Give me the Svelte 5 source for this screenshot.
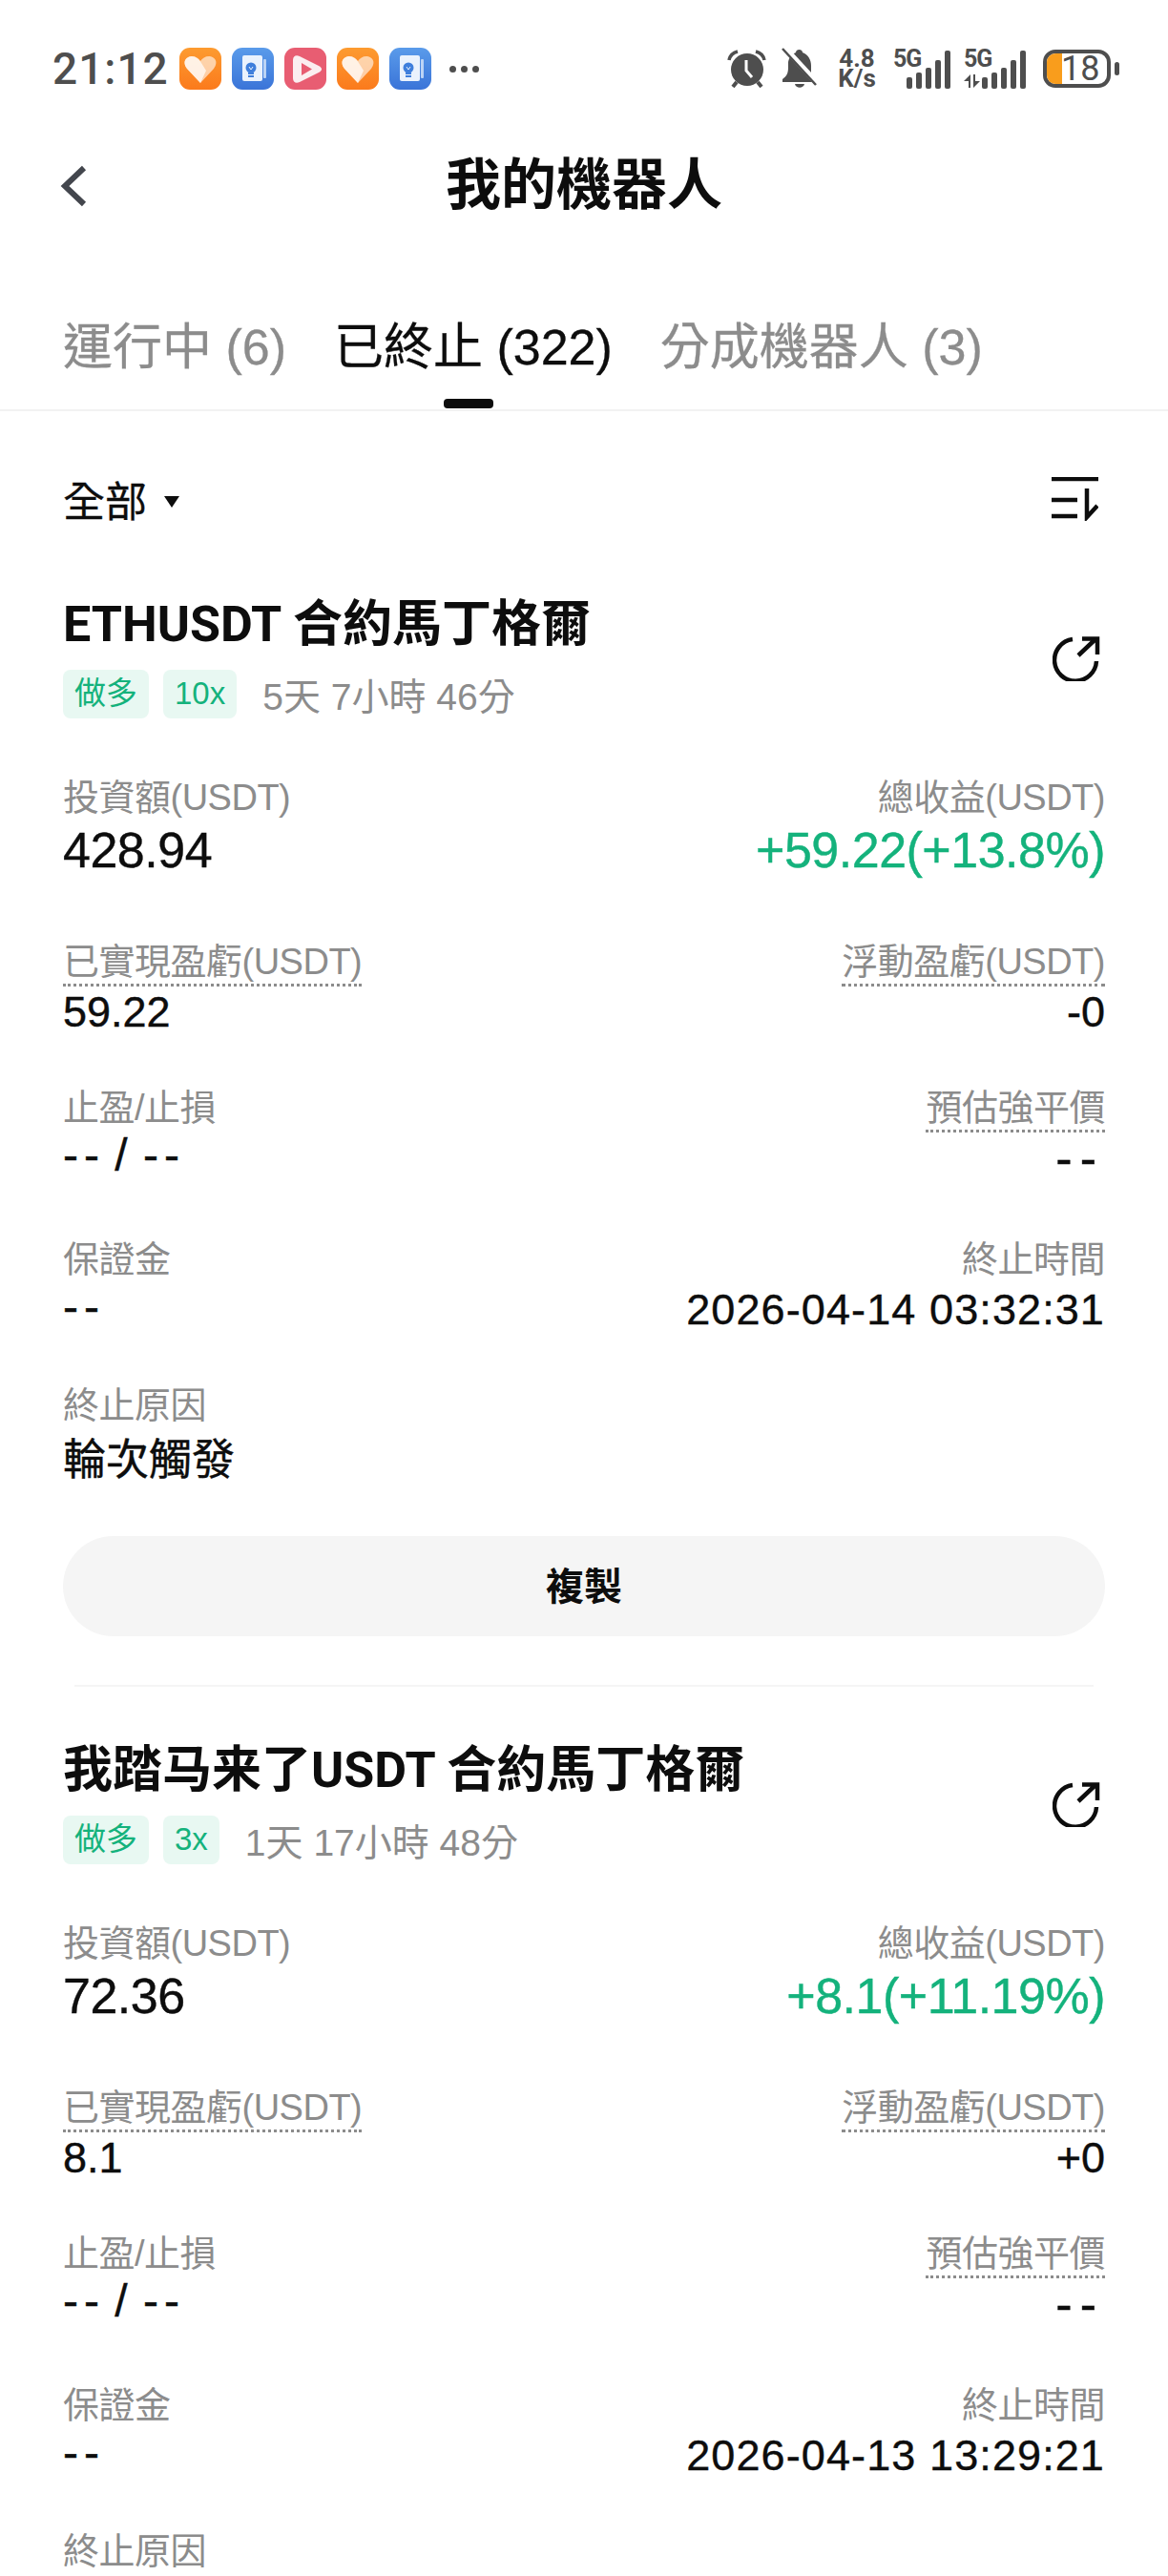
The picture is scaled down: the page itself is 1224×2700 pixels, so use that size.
<script>
	const bots = [
		{
			title: 'ETHUSDT 合約馬丁格爾', lev: '10x', time: '5天 7小時 46分',
			invest: '428.94', total: '+59.22(+13.8%)', realized: '59.22', floating: '-0',
			end: '2026-04-14 03:32:31', reason: '輪次觸發'
		},
		{
			title: '我踏马来了USDT 合約馬丁格爾', lev: '3x', time: '1天 17小時 48分',
			invest: '72.36', total: '+8.1(+11.19%)', realized: '8.1', floating: '+0',
			end: '2026-04-13 13:29:21', reason: ''
		}
	];
</script>

{#snippet bars()}
	<svg class="bars" width="47" height="40" viewBox="0 0 47 40">
		<g fill="#4e4e4e">
			<rect x="0" y="28" width="6" height="12" rx="2" />
			<rect x="10" y="23" width="6" height="17" rx="2" />
			<rect x="20" y="18" width="6" height="22" rx="2" />
			<rect x="30" y="10" width="6" height="30" rx="2" />
			<rect x="40" y="0" width="6" height="40" rx="2" />
		</g>
	</svg>
{/snippet}

<div class="page">
	<!-- status bar -->
	<div class="status">
		<div class="status-left">
			<span class="clock">21:12</span>
			{#each ['heart', 'book', 'play', 'heart', 'book'] as app}
				<span class="app {app}">
					{#if app === 'heart'}
						<svg viewBox="0 0 44 44" width="44" height="44">
							<path d="M22 37 L8 22 C2 14 8 9 13 9 C17 9 20 11 22 14 C24 11 27 9 31 9 C36 9 42 14 36 22 Z" fill="#fff" opacity=".6" />
							<path d="M22 37 L8 22 C2 14 8 9 13 9 C17 9 21 12 23 16 L28 24 Z" fill="#fff" opacity=".7" />
						</svg>
					{:else if app === 'book'}
						<svg viewBox="0 0 44 44" width="44" height="44">
							<rect x="11" y="8" width="21" height="27" rx="2" fill="#eaf2fd" />
							<rect x="33" y="12" width="3" height="20" rx="1" fill="#bcd4f5" />
							<circle cx="20" cy="21" r="5.5" fill="#3f7fdc" />
							<rect x="17" y="26" width="6" height="2" fill="#3f7fdc" />
							<rect x="17" y="29" width="6" height="2" fill="#3f7fdc" />
							<path d="M18 20 L20 23 L22 20" stroke="#eaf2fd" stroke-width="1" fill="none" />
						</svg>
					{:else}
						<svg viewBox="0 0 44 44" width="44" height="44">
							<path d="M9 13 C9 9 12 7 16 9 L36 19 C40 21 40 24 36 26 L16 36 C12 38 9 36 9 32 Z" fill="#fbeef0" />
							<path d="M18 16 L29 22.5 L18 29 Z" fill="#e85d72" />
						</svg>
					{/if}
				</span>
			{/each}
			<span class="more"><i></i><i></i><i></i></span>
		</div>
		<div class="status-right">
			<svg class="alarm" width="41" height="40" viewBox="0 0 41 40">
				<circle cx="21" cy="21" r="17" fill="#4e4e4e" />
				<path d="M2 11 C3 6 7 3 11 2 M39 11 C38 6 34 3 30 2" stroke="#4e4e4e" stroke-width="3.5" fill="none" />
				<path d="M10 34 L6 39 M32 34 L36 39" stroke="#4e4e4e" stroke-width="4" />
				<path d="M20 11 V22 L26 29" stroke="#fff" stroke-width="3" fill="none" />
			</svg>
			<svg class="bell" width="38" height="44" viewBox="0 0 38 44">
				<path d="M15 5 C15 1 22 1 22 5 C28 7 31 13 31 19 V27 L36 33 V36 H1 V33 C5 30 7 27 7 21 V15 C8 10 11 7 15 5 Z" fill="#4e4e4e" />
				<path d="M14 38 H24 C23 43 15 43 14 38 Z" fill="#4e4e4e" />
				<path d="M3 0 L38 38" stroke="#fff" stroke-width="6" />
				<path d="M1 1 L36 39" stroke="#4e4e4e" stroke-width="2.5" />
			</svg>
			<span class="speed"><span>4.8</span><span>K/s</span></span>
			<span class="net">
				<span class="fiveg">5G</span>
				{@render bars()}
			</span>
			<span class="net second">
				<span class="fiveg">5G</span>
				<svg class="arrows" width="17" height="14" viewBox="0 0 17 14"><path d="M7 0 V14 H5 V7 H0 Z M10 14 V0 H12 V7 H17 Z" fill="#4e4e4e" /></svg>
				{@render bars()}
			</span>
			<span class="battery"><span class="fill"></span><span class="level">18</span></span>
			<span class="nub"></span>
		</div>
	</div>

	<!-- title -->
	<div class="nav">
		<svg class="back" width="30" height="46" viewBox="0 0 30 46"><path d="M26 4 L6 23 L26 42" stroke="#43464d" stroke-width="6" fill="none" /></svg>
		<h1>我的機器人</h1>
	</div>

	<!-- tabs -->
	<div class="tabs">
		<span class="tab">運行中 (6)</span>
		<span class="tab on">已終止 (322)</span>
		<span class="tab">分成機器人 (3)</span>
	</div>

	<div class="filter">
		<span class="all">全部<i class="caret"></i></span>
		<svg width="49" height="46" viewBox="0 0 49 46">
			<path d="M0 2 H49 M0 24 H27 M0 41 H27" stroke="#0d0d0d" stroke-width="4.5" />
			<path d="M37 12 V42 L48 30" stroke="#0d0d0d" stroke-width="4.5" fill="none" />
		</svg>
	</div>

	{#each bots as bot, i}
		<section class="bot">
			<div class="head">
				<div>
					<div class="name">{bot.title}</div>
					<div class="tags">
						<span class="tag">做多</span>
						<span class="tag">{bot.lev}</span>
						<span class="runtime">{bot.time}</span>
					</div>
				</div>
				<svg class="share" width="50" height="48" viewBox="0 0 50 48">
					<path d="M21 4 A22 22 0 1 0 46 27" stroke="#0d0d0d" stroke-width="4.5" fill="none" />
					<path d="M27 21 L45 4 M31 3.5 H47 V20" stroke="#0d0d0d" stroke-width="4.5" fill="none" />
				</svg>
			</div>

			<div class="row r1">
				<div><div class="lbl">投資額(USDT)</div><div class="val big">{bot.invest}</div></div>
				<div class="right"><div class="lbl">總收益(USDT)</div><div class="val big green">{bot.total}</div></div>
			</div>
			<div class="row r2">
				<div><div class="lbl"><span class="dots">已實現盈虧(USDT)</span></div><div class="val">{bot.realized}</div></div>
				<div class="right"><div class="lbl"><span class="dots">浮動盈虧(USDT)</span></div><div class="val">{bot.floating}</div></div>
			</div>
			<div class="row r3">
				<div><div class="lbl">止盈/止損</div><div class="val dash">-- / --</div></div>
				<div class="right"><div class="lbl"><span class="dots">預估強平價</span></div><div class="val dash low">--</div></div>
			</div>
			<div class="row r4">
				<div><div class="lbl">保證金</div><div class="val dash">--</div></div>
				<div class="right"><div class="lbl">終止時間</div><div class="val date">{bot.end}</div></div>
			</div>
			<div class="row r5">
				<div><div class="lbl">終止原因</div>{#if bot.reason}<div class="val">{bot.reason}</div>{/if}</div>
			</div>
			{#if i === 0}
				<button class="copy">複製</button>
				<div class="sep"></div>
			{/if}
		</section>
	{/each}
</div>

<style>
	:global(body) {
		margin: 0;
		background: #fff;
	}
	.page {
		width: 1224px;
		height: 2700px;
		overflow: hidden;
		font-family: "Liberation Sans", "Noto Sans CJK TC", sans-serif;
		color: #0d0d0d;
	}
	.status {
		display: flex;
		justify-content: space-between;
		align-items: center;
		height: 44px;
		padding: 50px 51px 0 55px;
		color: #4e4e4e;
	}
	.status-left, .status-right {
		display: flex;
		align-items: center;
	}
	.clock {
		font-family: Roboto, sans-serif;
		font-size: 46px;
		font-weight: 500;
		letter-spacing: 1px;
		width: 133px;
	}
	.app {
		width: 44px;
		height: 44px;
		border-radius: 11px;
		margin-right: 11px;
		overflow: hidden;
	}
	.heart { background: linear-gradient(#fd9b30, #fb7a1c); }
	.book { background: linear-gradient(#5a9bea, #3a74d8); }
	.play { background: #e85d72; }
	.more {
		display: flex;
		gap: 5px;
		margin-left: 8px;
	}
	.more i {
		width: 7px;
		height: 7px;
		border-radius: 50%;
		background: #4e4e4e;
	}
	.alarm { margin-right: 16px; }
	.bell { margin-right: 20px; }
	.speed {
		display: flex;
		flex-direction: column;
		align-items: center;
		width: 42px;
		margin-right: 17px;
		font-family: Roboto, sans-serif;
		font-size: 26px;
		font-weight: 700;
		line-height: 21px;
	}
	.net {
		position: relative;
		display: flex;
		align-items: flex-end;
		height: 42px;
		margin-right: 13px;
		padding-left: 14px;
	}
	.fiveg {
		position: absolute;
		left: 0;
		top: 0;
		font-family: Roboto, sans-serif;
		font-size: 25px;
		font-weight: 700;
		letter-spacing: -1px;
		line-height: 22px;
	}
	.net.second {
		padding-left: 0;
		margin-right: 17px;
	}
	.arrows { margin: 0 2px 1px 0; }
	.bars { display: block; }
	.battery {
		position: relative;
		box-sizing: border-box;
		width: 71px;
		height: 40px;
		border: 4px solid #4e4e4e;
		border-radius: 13px;
		overflow: hidden;
	}
	.fill {
		position: absolute;
		left: 0;
		top: 0;
		bottom: 0;
		width: 16px;
		background: #f99d1c;
	}
	.level {
		position: absolute;
		left: 15px;
		top: -1px;
		font-family: Roboto, sans-serif;
		font-size: 36px;
		line-height: 34px;
	}
	.nub {
		width: 5px;
		height: 14px;
		border-radius: 3px;
		background: #4e4e4e;
		margin-left: 4px;
	}
	.nav {
		position: relative;
		display: flex;
		justify-content: center;
		align-items: center;
		height: 60px;
		margin-top: 70px;
	}
	.back {
		position: absolute;
		left: 62px;
		top: 8px;
	}
	h1 {
		margin: 0;
		font-size: 58px;
		font-weight: 700;
		line-height: 60px;
	}
	.tabs {
		display: flex;
		gap: 50px;
		height: 98px;
		margin-top: 109px;
		padding-left: 66px;
		border-bottom: 2px solid #f2f2f2;
		box-sizing: border-box;
		font-size: 52px;
		line-height: 62px;
		color: #8c8c8c;
		-webkit-text-stroke: 0.3px currentColor;
	}
	.tab { position: relative; }
	.tab.on { color: #0d0d0d; }
	.tab.on::after {
		content: "";
		position: absolute;
		left: 115px;
		bottom: 1px;
		width: 52px;
		height: 10px;
		border-radius: 4px;
		background: #0d0d0d;
	}
	.filter {
		display: flex;
		justify-content: space-between;
		align-items: center;
		height: 50px;
		margin-top: 67px;
		padding: 0 73px 19px 66px;
	}
	.all {
		display: flex;
		align-items: center;
		font-size: 44px;
		-webkit-text-stroke: 0.3px currentColor;
	}
	.caret {
		margin: 6px 0 0 18px;
		border-left: 8px solid transparent;
		border-right: 8px solid transparent;
		border-top: 12px solid #0d0d0d;
	}
	.bot { padding: 0 66px; }
	.head {
		display: flex;
		justify-content: space-between;
		align-items: center;
		margin-top: 57px;
	}
	.share { margin-right: 5px; }
	.name {
		font-family: Roboto, "Noto Sans CJK TC", sans-serif;
		font-size: 52px;
		font-weight: 700;
		line-height: 62px;
	}
	.tags {
		display: flex;
		align-items: center;
		gap: 15px;
		margin-top: 13px;
	}
	.tag {
		padding: 0 12px;
		height: 51px;
		line-height: 49px;
		font-size: 33px;
		border-radius: 8px;
		background: #e8f8f2;
		color: #14b27c;
	}
	.runtime {
		font-size: 39px;
		color: #8c8c8c;
		margin-left: 12px;
	}
	.row {
		display: flex;
		justify-content: space-between;
	}
	.row.r1 {
		height: 172px;
		margin-top: 59px;
	}
	.row.r2 { height: 153px; }
	.row.r3 { height: 159px; }
	.row.r4 { height: 153px; }
	.right { text-align: right; }
	.lbl {
		font-size: 38px;
		line-height: 44px;
		letter-spacing: -0.5px;
		color: #8c8c8c;
	}
	.dots {
		padding-bottom: 2px;
		border-bottom: 3px dotted #8c8c8c;
	}
	.val {
		margin-top: 2px;
		font-size: 45px;
		line-height: 58px;
		-webkit-text-stroke: 0.4px currentColor;
	}
	.r5 .val { margin-top: 7px; }
	.val.big {
		font-size: 52px;
		line-height: 62px;
		letter-spacing: -0.5px;
	}
	.val.dash {
		margin-top: -1px;
		font-size: 48px;
		letter-spacing: 6px;
		word-spacing: -9px;
	}
	.val.low {
		margin-top: 2px;
		font-size: 52px;
		letter-spacing: 8px;
		padding-right: 1px;
	}
	.val.date { letter-spacing: 1.1px; }
	.green { color: #14b27c; }
	.copy {
		display: block;
		width: 100%;
		height: 105px;
		margin-top: 50px;
		padding: 0 0 6px;
		border: 0;
		border-radius: 53px;
		background: #f5f5f5;
		color: #0d0d0d;
		font: 700 40px "Liberation Sans", "Noto Sans CJK TC", sans-serif;
	}
	.sep {
		height: 2px;
		margin: 51px 12px 0;
		background: #f5f5f5;
	}
</style>
